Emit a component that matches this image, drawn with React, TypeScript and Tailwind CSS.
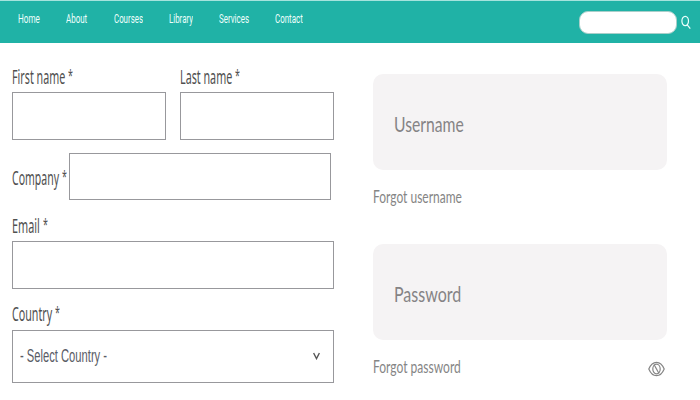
import { useLayoutEffect, useRef, useState } from "react";

type FitProps = { text: string; width: number; className?: string };

// Condenses a line of text horizontally so that it fills the given width.
function Fit({ text, width, className = "" }: FitProps) {
  const ref = useRef<HTMLSpanElement>(null);
  const [scale, setScale] = useState(1);
  useLayoutEffect(() => {
    if (ref.current) setScale(width / ref.current.offsetWidth);
  }, [width, text]);
  return (
    <span className={`block shrink-0 whitespace-nowrap ${className}`} style={{ width }}>
      <span ref={ref} className="inline-block origin-left" style={{ transform: `scaleX(${scale})` }}>
        {text}
      </span>
    </span>
  );
}

const links = [
  { text: "Home", width: 22 },
  { text: "About", width: 21 },
  { text: "Courses", width: 29 },
  { text: "Library", width: 24 },
  { text: "Services", width: 30 },
  { text: "Contact", width: 28 },
];

const box = "block border border-[#98989c] bg-white outline-none";

function Label({ text, width, className = "" }: FitProps) {
  return (
    <div className={`flex gap-[3px] font-['Noto_Sans',sans-serif] leading-6 text-[#505050] ${className}`}>
      <Fit className="text-[19px]" text={text} width={width} />
      <Fit className="-mt-0.5 text-[16px]" text="*" width={5} />
    </div>
  );
}

function Header() {
  return (
    <header className="flex h-[43px] items-start border-t border-[#a5e3dd] bg-[#20b2a6]">
      <nav className="flex gap-[26.3px] pt-2.5 pl-[18px] font-[Roboto,sans-serif] text-[12.5px] leading-4 text-[#eefffc]">
        {links.map((l) => (
          <a key={l.text} href="#">
            <Fit text={l.text} width={l.width} />
          </a>
        ))}
      </nav>
      <input
        aria-label="Search"
        className="mt-2.5 ml-auto h-[23px] w-[98px] rounded-[9px] border border-[#a9cfca] bg-white outline-none"
      />
      <svg className="mt-3.5 mr-[9px] ml-1 h-[15px] w-2.5" viewBox="0 0 10 15" fill="none" stroke="#eafffc" strokeWidth="1.2">
        <ellipse cx="4.2" cy="6" rx="3.3" ry="4.7" />
        <path d="M6.2 9.8 9.3 13.7" />
      </svg>
    </header>
  );
}

function DetailsForm() {
  return (
    <form className="w-[322px]">
      <div className="flex gap-3.5 pt-[22px]">
        <div>
          <Label text="First name" width={53} />
          <input aria-label="First name" className={`${box} mt-[3px] h-12 w-[154px]`} />
        </div>
        <div>
          <Label text="Last name" width={52} />
          <input aria-label="Last name" className={`${box} mt-[3px] h-12 w-[154px]`} />
        </div>
      </div>
      <div className="mt-[13px] flex">
        <Label className="pt-[13px]" text="Company" width={47} />
        <input aria-label="Company" className={`${box} ml-0.5 h-[47px] w-[262px]`} />
      </div>
      <Label className="mt-3.5" text="Email" width={28} />
      <input aria-label="Email" className={`${box} mt-[3px] h-12 w-full`} />
      <Label className="mt-[13px]" text="Country" width={40} />
      <div className={`${box} mt-1 flex h-[53px] items-center justify-between pr-[13px] pb-0.5 pl-[7px]`}>
        <Fit
          className="font-['Liberation_Sans',sans-serif] text-[18px] leading-6 text-[#5a5c66]"
          text="- Select Country -"
          width={87}
        />
        <svg className="h-2 w-[7px]" viewBox="0 0 7 8" fill="none" stroke="#555" strokeWidth="1.4">
          <path d="M.6 1 3.5 6.6 6.4 1" />
        </svg>
      </div>
    </form>
  );
}

const field = "flex h-24 items-center rounded-[10px] bg-[#f5f3f4] pt-[3px] pl-[21px]";
const fieldText = "font-[Lato,sans-serif] text-[22px] leading-7 text-[#858385]";
const hint = "font-[Lato,sans-serif] text-[17.5px] leading-6 text-[#858585]";

function Login() {
  return (
    <section className="mt-[31px] ml-[39px] w-[294px]">
      <div className={field}>
        <Fit className={fieldText} text="Username" width={70} />
      </div>
      <Fit className={`${hint} mt-[15px]`} text="Forgot username" width={89} />
      <div className={`${field} mt-[35px]`}>
        <Fit className={fieldText} text="Password" width={67} />
      </div>
      <div className="mt-[15px] flex items-center justify-between pr-0.5">
        <Fit className={hint} text="Forgot password" width={88} />
        <svg className="mt-1 h-4 w-[17px]" viewBox="0 0 17 16" fill="none" stroke="#858585" strokeWidth="1.2">
          <path d="M.8 8C2.6 3.7 5.2 1.3 8.5 1.3S14.4 3.7 16.2 8C14.4 12.3 11.8 14.7 8.5 14.7S2.6 12.3.8 8Z" />
          <ellipse cx="8.5" cy="8" rx="3.7" ry="4.8" />
          <path d="M6 3.5 11 12.5" />
        </svg>
      </div>
    </section>
  );
}

export default function App() {
  return (
    <div className="h-[400px] w-[700px] overflow-hidden bg-white">
      <Header />
      <main className="flex pl-3">
        <DetailsForm />
        <Login />
      </main>
    </div>
  );
}
